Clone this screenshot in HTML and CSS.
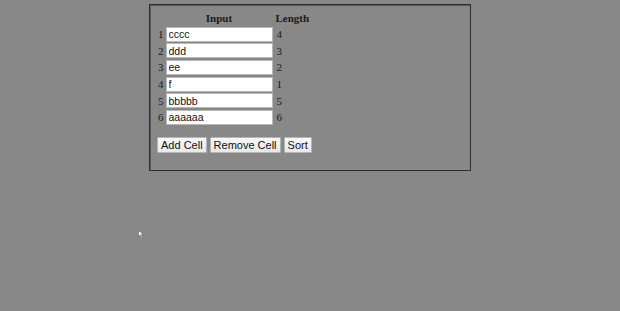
FILE: index.html
```html
<!DOCTYPE html>
<html>
<head>
<meta charset="utf-8">
<link rel="stylesheet" href="styles.css">
</head>
<body>
<div class="box">
  <table class="cells">
    <thead>
      <tr><th></th><th class="h-input">Input</th><th class="h-len">Length</th></tr>
    </thead>
    <tbody>
      <tr><td class="num">1</td><td><input class="cell" value="cccc"></td><td class="len">4</td></tr>
      <tr><td class="num">2</td><td><input class="cell" value="ddd"></td><td class="len">3</td></tr>
      <tr><td class="num">3</td><td><input class="cell" value="ee"></td><td class="len">2</td></tr>
      <tr><td class="num">4</td><td><input class="cell" value="f"></td><td class="len">1</td></tr>
      <tr><td class="num">5</td><td><input class="cell" value="bbbbb"></td><td class="len">5</td></tr>
      <tr><td class="num">6</td><td><input class="cell" value="aaaaaa"></td><td class="len">6</td></tr>
    </tbody>
  </table>
  <div class="buttons">
    <button class="btn">Add Cell</button>
    <button class="btn">Remove Cell</button>
    <button class="btn">Sort</button>
  </div>
</div>
<svg class="cursor" width="6" height="8" viewBox="0 0 6 8"><path d="M0.5 0.5 L0.5 6.5 L2 5 L3.5 7.5 L4.5 7 L3.2 4.6 L5.5 4.6 Z" fill="#fff" stroke="#666" stroke-width="0.6"/></svg>
</body>
</html>
```
FILE: styles.css
```css
html, body {
  margin: 0;
  padding: 0;
  background: #888888;
  width: 620px;
  height: 311px;
  overflow: hidden;
}
body {
  position: relative;
  font-family: "Liberation Serif", "Times New Roman", serif;
  font-size: 11px;
  color: #1a1a1a;
}
.box {
  box-sizing: border-box;
  width: 322px;
  height: 167px;
  margin: 4px auto 0;
  border: 1px solid #2e2e2e;
  box-shadow: inset 1px 1px 0 #5a5a5a;
  padding: 6px 6px 0 8px;
}
.cells {
  border-collapse: separate;
  border-spacing: 0;
}
.cells th {
  font-weight: bold;
  height: 14px;
  padding: 0 0 1px 0;
  line-height: 14px;
}
.h-input { text-align: center; }
.h-len { text-align: left; padding-left: 3px !important; }
.cells td {
  padding: 0;
  height: 16.6px;
  line-height: 14px;
  vertical-align: middle;
}
.num { padding-right: 2px !important; text-align: right; }
.len { padding-left: 4px !important; }
.cell {
  box-sizing: border-box;
  width: 107px;
  height: 15px;
  margin: 0;
  padding: 0 2px;
  border: 1px solid #b8b8b8;
  background: #fff;
  font-family: "Liberation Sans", Arial, sans-serif;
  font-size: 10.5px;
  color: #111;
  display: block;
}
.buttons {
  display: flex;
  gap: 3px;
  margin-top: 11px;
  margin-left: -1px;
}
.btn {
  box-sizing: border-box;
  height: 16px;
  padding: 0 3px;
  margin: 0;
  border: 1px solid #b5b5b5;
  border-radius: 1px;
  background: linear-gradient(#f8f8f8, #e8e8e8);
  font-family: "Liberation Sans", Arial, sans-serif;
  font-size: 11px;
  color: #111;
  line-height: 14px;
}
.cursor {
  position: absolute;
  left: 138px;
  top: 230px;
}
```
